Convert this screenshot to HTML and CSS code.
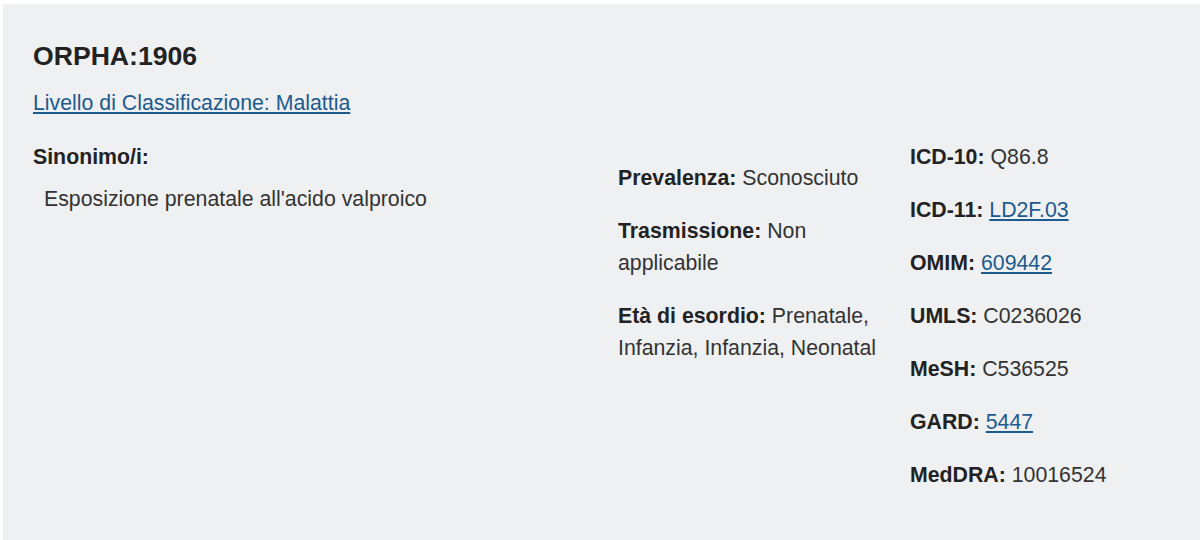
FILE: index.html
```html
<!DOCTYPE html>
<html lang="it">
<head>
<meta charset="utf-8">
<title>ORPHA:1906</title>
<link rel="stylesheet" href="styles.css">
</head>
<body>
<div class="page">
  <section class="panel">
    <h1 class="title">ORPHA:1906</h1>
    <a class="classif" href="#">Livello di Classificazione: Malattia</a>
    <div class="grid">
      <div class="col-syn">
        <div class="label">Sinonimo/i:</div>
        <ul class="syn-list">
          <li>Esposizione prenatale all'acido valproico</li>
        </ul>
      </div>
      <div class="col-mid">
        <div class="item"><b>Prevalenza:</b> Sconosciuto</div>
        <div class="item"><b>Trasmissione:</b> Non applicabile</div>
        <div class="item"><b>Età di esordio:</b> Prenatale, Infanzia, Infanzia, Neonatal</div>
      </div>
      <div class="col-codes">
        <div class="item"><b>ICD-10:</b> Q86.8</div>
        <div class="item"><b>ICD-11:</b> <a href="#">LD2F.03</a></div>
        <div class="item"><b>OMIM:</b> <a href="#">609442</a></div>
        <div class="item"><b>UMLS:</b> C0236026</div>
        <div class="item"><b>MeSH:</b> C536525</div>
        <div class="item"><b>GARD:</b> <a href="#">5447</a></div>
        <div class="item"><b>MedDRA:</b> 10016524</div>
      </div>
    </div>
  </section>
</div>
</body>
</html>
```
FILE: styles.css
```css
html, body {
  margin: 0;
  padding: 0;
  background: #ffffff;
}
body {
  font-family: "Liberation Sans", Arial, sans-serif;
  color: #333333;
  font-size: 21.3px;
}
.page {
  padding: 4px 0 0 3px;
  height: 536px;
  overflow: hidden;
}
.panel {
  background: #eff0f2;
  height: 100%;
  padding: 36px 30px 0 30px;
  box-sizing: border-box;
}
.title {
  margin: 0;
  font-size: 26.6px;
  line-height: 32px;
  font-weight: bold;
  color: #222222;
}
.classif {
  display: inline-block;
  margin-top: 15px;
  line-height: 32px;
  color: #1d5a8e;
  text-decoration: underline;
}
.grid {
  display: grid;
  grid-template-columns: 555px 262px 1fr;
  column-gap: 30px;
  margin-top: 22px;
}
.label {
  font-weight: bold;
  color: #222222;
  line-height: 32px;
}
.syn-list {
  list-style: none;
  margin: 10px 0 0 0;
  padding: 0 0 0 11px;
  line-height: 32px;
}
.col-mid {
  padding-top: 21px;
}
.item {
  line-height: 32px;
  margin-bottom: 21px;
}
.item b {
  color: #222222;
}
.item a {
  color: #1d5a8e;
  text-decoration: underline;
}
```
